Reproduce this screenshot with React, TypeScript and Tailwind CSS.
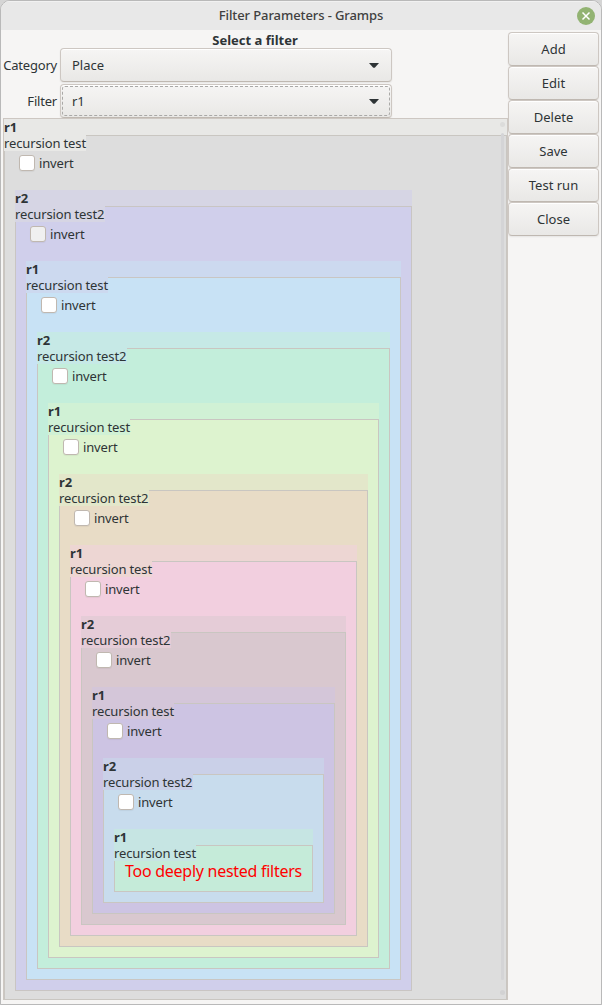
import React from "react";

type Level = { head: string; body: string; line: string; disabled?: boolean };

const levels: Level[] = [
  { head: "bg-[#e8e8e6]", body: "bg-[#dddddd]", line: "border-[#c9c6c1]" },
  { head: "bg-[#d6d5e4]", body: "bg-[#d0cfeb]", line: "border-[#c9c5c3]", disabled: true },
  { head: "bg-[#ccd9ef]", body: "bg-[#c8e2f5]", line: "border-[#c9c6c3]" },
  { head: "bg-[#c6e9e6]", body: "bg-[#c3eedb]", line: "border-[#c9c6c1]" },
  { head: "bg-[#d0f1d5]", body: "bg-[#ddf3cf]", line: "border-[#c9c6c1]" },
  { head: "bg-[#e3e7ca]", body: "bg-[#e8dcc6]", line: "border-[#c9c6c1]" },
  { head: "bg-[#edd6d3]", body: "bg-[#f2cfdf]", line: "border-[#c9c6c1]" },
  { head: "bg-[#e5ccd7]", body: "bg-[#d9c8cf]", line: "border-[#c9c6c1]" },
  { head: "bg-[#d4c6d9]", body: "bg-[#cdc4e3]", line: "border-[#c9c6c1]" },
  { head: "bg-[#cad0e8]", body: "bg-[#c8dced]", line: "border-[#c9c6c1]" },
  { head: "bg-[#c6e5e3]", body: "bg-[#c5ebd9]", line: "border-[#c9c6c1]" },
];

function FilterFrame({ depth }: { depth: number }) {
  const { head, body, line, disabled } = levels[depth];
  const even = depth % 2 === 0;
  const last = depth === levels.length - 1;
  return (
    <section className={`flex grow flex-col ${head}`}>
      <h2 className="h-4 text-[13px] leading-4 font-bold tracking-[-0.1px]">{even ? "r1" : "r2"}</h2>
      <div className={`flex grow flex-col border ${body} ${line}`}>
        <p className={`-mt-px -ml-px h-4 self-start whitespace-nowrap leading-4 tracking-[-0.14px] ${even ? "w-[82px]" : "w-[90px]"} ${head}`}>
          {even ? "recursion test" : "recursion test2"}
        </p>
        {last ? (
          <p className="flex h-[30px] items-start justify-center text-[16px] leading-5 tracking-[-0.27px] whitespace-nowrap text-[#ff0000]">
            Too deeply nested filters
          </p>
        ) : (
          <>
            <label className="mt-1 ml-[14px] flex h-4 items-center gap-1">
              <span className={`size-4 rounded-[3px] border border-[#c0b8b0] shadow-[0_1px_1px_#0000000d] ${disabled ? "bg-[#f0f0f0]" : "bg-white"}`} />
              <span className="pt-[2px] tracking-[-0.15px]">invert</span>
            </label>
            <div className={`mt-[19px] ml-[10px] flex grow flex-col ${depth === 0 ? "mr-[94px] mb-2" : "mr-[10px] mb-[10px]"}`}>
              <FilterFrame depth={depth + 1} />
            </div>
          </>
        )}
      </div>
    </section>
  );
}

function Combo({ label, value, focused }: { label: string; value: string; focused?: boolean }) {
  return (
    <div className="flex h-[34px] items-center">
      <span className="w-[54px] pt-[2px] text-right tracking-[-0.2px]">{label}</span>
      <div className="relative ml-[3px] flex h-[34px] w-[332px] items-center justify-between rounded-[4px] border border-[#cdc7c2] border-b-[#bfb8b1] bg-linear-to-b from-[#f6f5f4] to-[#e9e8e6] pr-3 pl-[11px] shadow-[inset_0_1px_#ffffff,0_1px_2px_#00000012]">
        {focused && <span className="absolute inset-[1px] rounded-[3px] border border-dashed border-[#aaa9a7]" />}
        <span className="pt-[2px]">{value}</span>
        <svg width="10" height="5" viewBox="0 0 10 5"><path d="M0 0H10L6 4.4Q5 5.2 4 4.4Z" fill="#2e3436" /></svg>
      </div>
    </div>
  );
}

export default function App() {
  return (
    <div className="h-[1005px] w-[602px] bg-[#d5d5d5] text-[13px] text-[#2e3436] [font-family:'Noto_Sans',sans-serif]">
      <div className="flex h-full flex-col overflow-hidden rounded-t-[10px] border border-[#b9b9b9] bg-[#f6f5f4]">
        <header className="flex h-[29px] shrink-0 items-center bg-[#e8e8e8] pr-[6px] pl-6 shadow-[inset_0_1px_#f1f1f1]">
          <h1 className="grow text-center text-[13px] font-medium tracking-[-0.1px] text-[#404040]">Filter Parameters - Gramps</h1>
          <svg width="18" height="18" viewBox="0 0 18 18"><circle cx="9" cy="9" r="9" fill="#92b372" /><path d="M5.5 5.5L12.5 12.5M12.5 5.5L5.5 12.5" stroke="white" strokeWidth="1.5" /></svg>
        </header>
        <div className="flex min-h-0 grow">
          <main className="ml-[2px] flex w-[505px] shrink-0 flex-col">
            <h2 className="h-[18px] pr-[1px] text-center leading-[21px] font-bold">Select a filter</h2>
            <div className="flex flex-col gap-[2px]">
              <Combo label="Category" value="Place" />
              <Combo label="Filter" value="r1" focused />
            </div>
            <div className="relative flex h-[882px] border border-[#cdc7c2]">
              <FilterFrame depth={0} />
              <div className="absolute inset-y-0 right-[2px] flex w-[5px] flex-col items-center pt-[3px] pb-1">
                <span className="size-[5px] rounded-full bg-[#dcdcdb]" />
                <span className="mt-[6px] mb-[10px] w-[3px] grow rounded-full bg-[#d4d4d6]" />
                <span className="size-[5px] rounded-full bg-[#d2d2d3]" />
              </div>
            </div>
          </main>
          <nav className="mt-[2px] flex w-[91px] flex-col">
            {["Add", "Edit", "Delete", "Save", "Test run", "Close"].map((name) => (
              <button key={name} className="h-[34px] rounded-[4px] border border-[#cdc7c2] border-b-[#bfb8b1] bg-linear-to-b from-[#f6f5f4] to-[#e9e8e6] pt-[2px] shadow-[inset_0_1px_#ffffff,0_1px_2px_#00000012]">{name}</button>
            ))}
          </nav>
        </div>
      </div>
    </div>
  );
}
